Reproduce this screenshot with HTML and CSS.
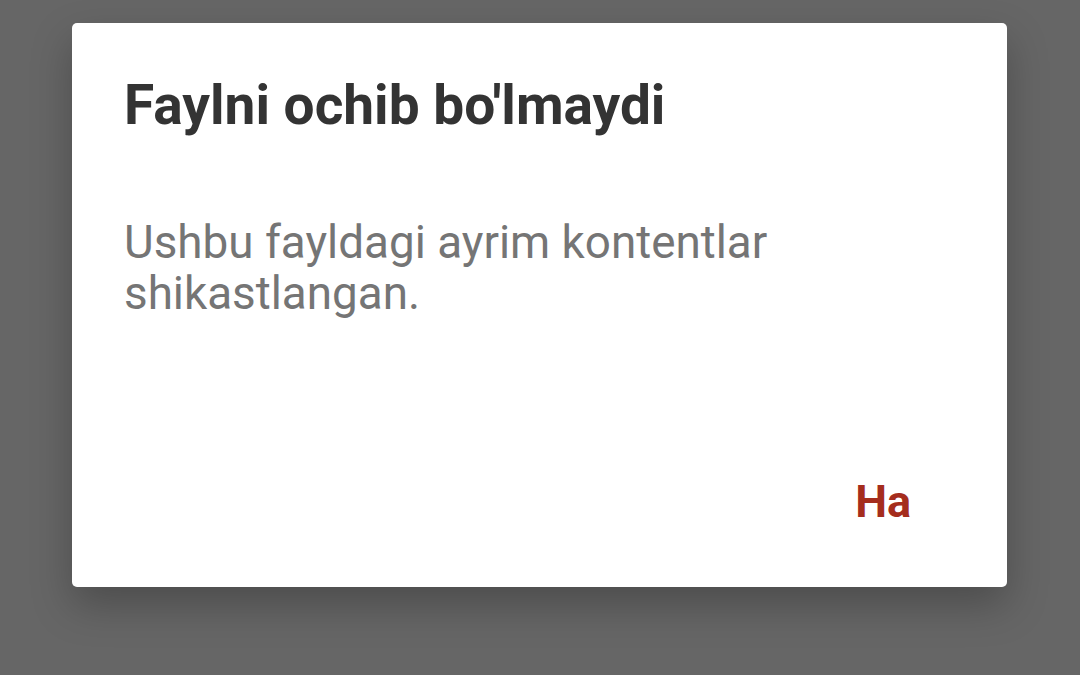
FILE: index.html
```html
<!DOCTYPE html>
<html>
<head>
<meta charset="utf-8">
<link rel="stylesheet" href="styles.css">
</head>
<body>
<div class="screen">
  <div class="dialog">
    <h1 class="title">Faylni ochib bo'lmaydi</h1>
    <p class="message">Ushbu fayldagi ayrim kontentlar shikastlangan.</p>
    <div class="actions">
      <button class="btn">Ha</button>
    </div>
  </div>
</div>
</body>
</html>
```
FILE: styles.css
```css
html, body {
  margin: 0;
  padding: 0;
  width: 1080px;
  height: 675px;
  overflow: hidden;
  background: #666666;
  font-family: Roboto, "Noto Sans", sans-serif;
}
.screen {
  width: 1080px;
  height: 675px;
  padding: 23px 0 0 72px;
  box-sizing: border-box;
}
.dialog {
  width: 935px;
  height: 564px;
  background: #ffffff;
  border-radius: 5px;
  box-shadow: 0 18px 40px rgba(0,0,0,0.25);
  box-sizing: border-box;
  padding: 0 96px 0 52px;
  display: flex;
  flex-direction: column;
}
.title {
  margin: 50px 0 0 0;
  font-size: 55px;
  font-weight: 700;
  line-height: 64px;
  color: #333333;
  white-space: nowrap;
}
.message {
  margin: 80px 0 0 0;
  font-size: 45.8px;
  line-height: 51px;
  color: #757575;
  width: 700px;
}
.actions {
  margin-top: auto;
  margin-bottom: 61px;
  display: flex;
  justify-content: flex-end;
}
.btn {
  border: none;
  background: none;
  padding: 0;
  font-family: Roboto, sans-serif;
  font-size: 45px;
  font-weight: 700;
  color: #a52d1d;
  line-height: 48px;
}
```
